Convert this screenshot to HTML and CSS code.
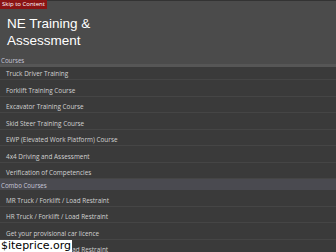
FILE: index.html
```html
<!DOCTYPE html>
<html lang="en">
<head>
<meta charset="utf-8">
<title>NE Training &amp; Assessment</title>
<link rel="stylesheet" href="styles.css">
</head>
<body>
<a class="skip-link" href="#content">Skip to Content</a>
<header class="site-header">
  <div class="site-title">NE Training &amp;<br>Assessment</div>
</header>
<nav class="menu">
  <div class="menu-heading">Courses</div>
  <ul class="menu-list first-group">
    <li class="menu-item">Truck Driver Training</li>
    <li class="menu-item">Forklift Training Course</li>
    <li class="menu-item">Excavator Training Course</li>
    <li class="menu-item">Skid Steer Training Course</li>
    <li class="menu-item">EWP (Elevated Work Platform) Course</li>
    <li class="menu-item">4x4 Driving and Assessment</li>
    <li class="menu-item">Verification of Competencies</li>
  </ul>
  <div class="menu-heading combo">Combo Courses</div>
  <ul class="menu-list">
    <li class="menu-item">MR Truck / Forklift / Load Restraint</li>
    <li class="menu-item">HR Truck / Forklift / Load Restraint</li>
    <li class="menu-item">Get your provisional car licence</li>
    <li class="menu-item">HC Truck / Forklift / Load Restraint</li>
  </ul>
</nav>
<div class="watermark">$iteprice.org</div>
</body>
</html>
```
FILE: styles.css
```css
html, body {
  margin: 0;
  padding: 0;
}
body {
  background: #3a3a3a;
  width: 336px;
  height: 252px;
  overflow: hidden;
  position: relative;
  font-family: "Open Sans", "DejaVu Sans", sans-serif;
}
.skip-link {
  position: absolute;
  top: 0;
  left: 0;
  width: 47px;
  height: 9px;
  background: #8a1414;
  color: #ffffff;
  font-size: 6px;
  line-height: 9px;
  text-align: center;
  text-decoration: none;
}
.site-header {
  background: #4b4b4b;
  border-top: 1px solid #333333;
  padding: 13.5px 7px 4px;
}
.site-title {
  color: #ffffff;
  font-family: "Liberation Sans", Arial, sans-serif;
  font-size: 13.5px;
  line-height: 17px;
}
.menu-heading {
  background: #4b4b4b;
  color: #c6c6d8;
  font-size: 6.2px;
  line-height: 7px;
  height: 11px;
  box-sizing: border-box;
  padding: 4px 1px 0;
}
.menu-heading.combo {
  background: #4a4a50;
  padding-top: 3px;
}
.menu-list {
  list-style: none;
  margin: 0;
  padding: 0;
}
.menu-item {
  color: #d2d2d2;
  font-size: 6.4px;
  line-height: 7px;
  padding: 6.5px 6px 2px;
  border-bottom: 1px solid #454545;
  white-space: nowrap;
}
.first-group .menu-item:first-child {
  border-top: 3px solid #565656;
  padding-top: 3.5px;
}
.watermark {
  position: absolute;
  left: 0;
  bottom: 0;
  height: 12px;
  padding: 0 1px;
  background: #ffffff;
  color: #000000;
  font-family: "DejaVu Sans", sans-serif;
  font-size: 11px;
  line-height: 12px;
  white-space: nowrap;
}
```
